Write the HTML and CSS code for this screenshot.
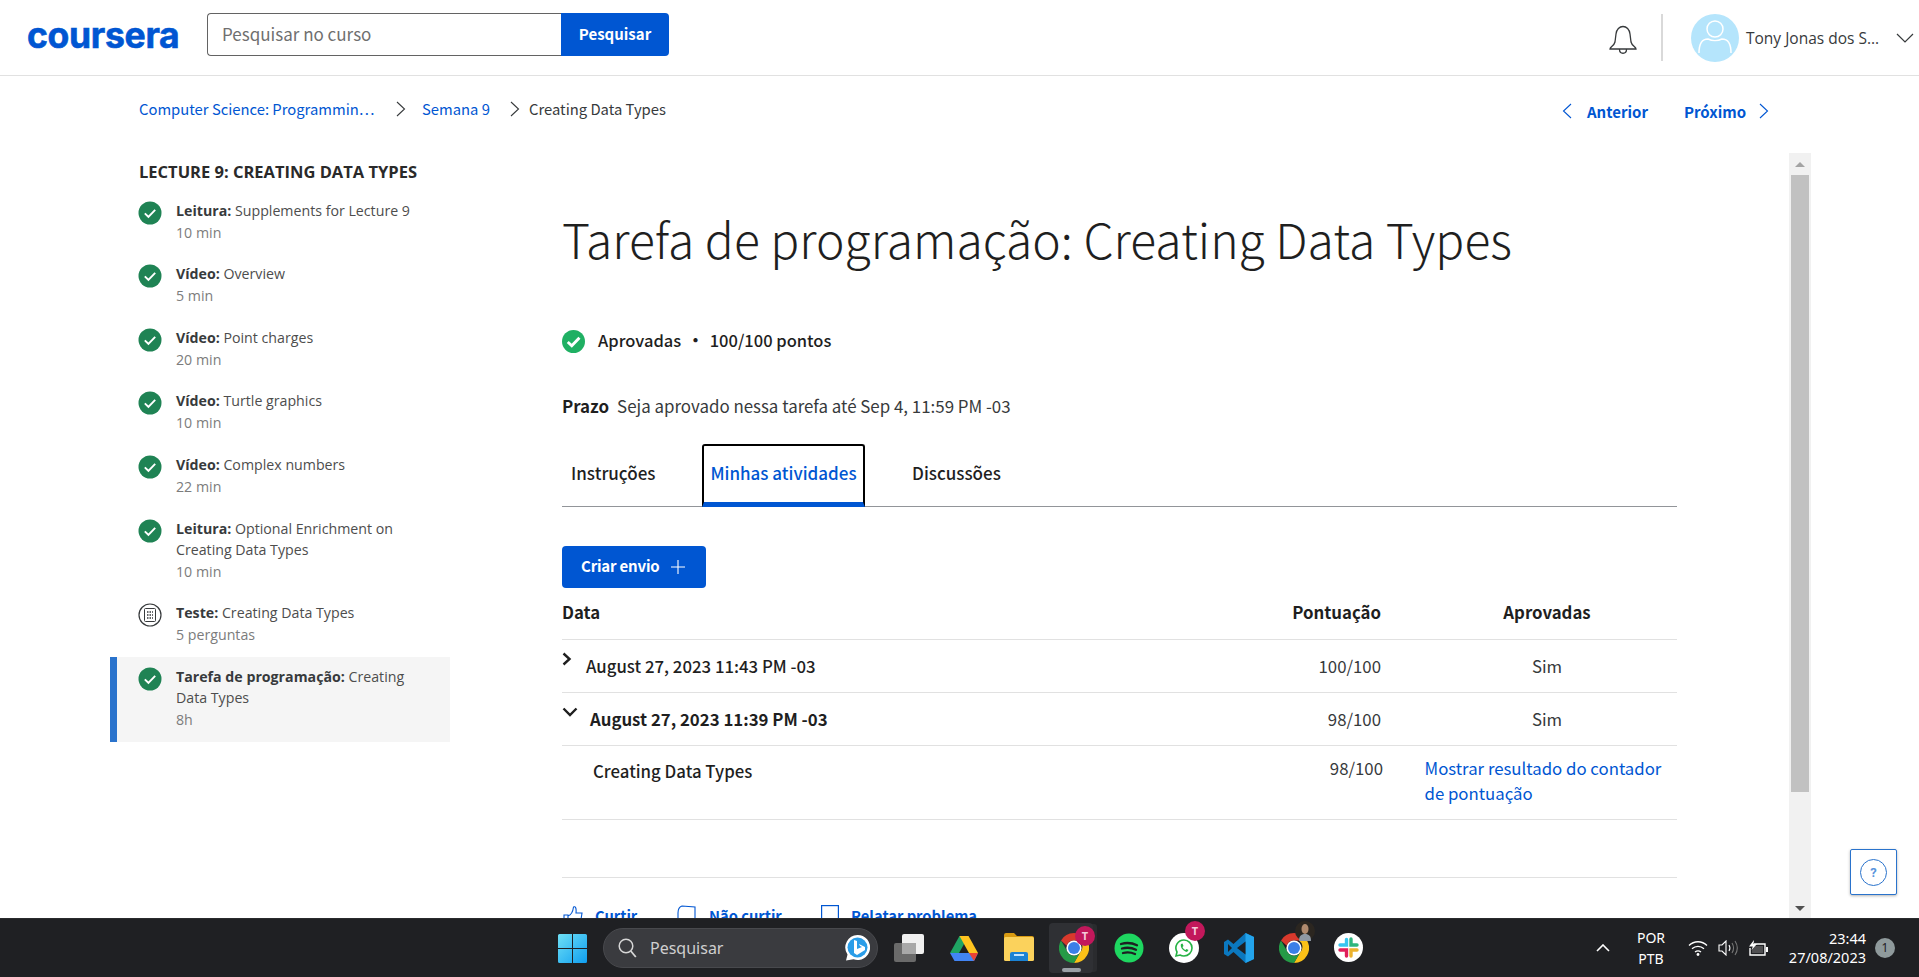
FILE: index.html
```html
<!DOCTYPE html>
<html lang="pt-BR">
<head>
<meta charset="utf-8">
<title>Tarefa de programação: Creating Data Types</title>
<link rel="stylesheet" href="styles.css">
</head>
<body>
<svg class="defs" width="0" height="0" aria-hidden="true">
  <symbol id="done" viewBox="0 0 24 24"><circle cx="12" cy="12" r="11.5" fill="#1f8354"/><path d="M6.8 12.4l3.6 3.4 6.8-7" fill="none" stroke="#fff" stroke-width="1.9"/></symbol>
  <symbol id="chrome" viewBox="0 0 30 30">
    <path d="M15 0a15 15 0 0 1 13 7.500H15a7.500 7.500 0 0 0-7.200 5.300L2 7.500A15 15 0 0 1 15 0z" fill="#d9392c"/>
    <path d="M28 7.500A15 15 0 0 1 15 30l6.500-11.200A7.500 7.500 0 0 0 20 7.500z" fill="#fbc117"/>
    <path d="M2 7.500l6 10.500a7.500 7.500 0 0 0 13.500.800L15 30A15 15 0 0 1 2 7.500z" fill="#259a46"/>
    <circle cx="15" cy="15" r="7.600" fill="#fff"/><circle cx="15" cy="15" r="6" fill="#3a7fe8"/>
  </symbol>
</svg>

<header class="topbar">
  <a class="logo">coursera</a>
  <div class="search">
    <div class="search-input">Pesquisar no curso</div>
    <div class="search-btn">Pesquisar</div>
  </div>
  <div class="top-right">
    <svg class="bell" width="28" height="30" viewBox="0 0 28 30"><path d="M1 24c0-2 4-3 5-7l1-8c.5-4.500 3.500-7.500 7-7.500s6.500 3 7 7.500l1 8c1 4 5 5 5 7z M10.500 24.500c0 5 7 5 7 0" fill="none" stroke="#373a3c" stroke-width="1.300"/></svg>
    <div class="divider"></div>
    <svg class="avatar" width="48" height="48" viewBox="0 0 48 48"><circle cx="24" cy="24" r="24" fill="#b5e5fc"/><circle cx="24" cy="15" r="8" fill="none" stroke="#fff" stroke-width="1.500"/><path d="M8 39c0-10 4-14 9-14 4 2 10 2 14 0 5 0 9 4 9 14" fill="none" stroke="#fff" stroke-width="1.500"/></svg>
    <span class="user-name">Tony Jonas dos S…</span>
    <svg class="user-caret" width="18" height="10" viewBox="0 0 18 10"><path d="M1 1l8 8 8-8" fill="none" stroke="#373a3c" stroke-width="1.200"/></svg>
  </div>
</header>

<nav class="subnav">
  <div class="crumbs">
    <a class="crumb-link crumb-course">Computer Science: Programmin…</a>
    <svg class="crumb-sep" width="10" height="16" viewBox="0 0 10 16"><path d="M1 1l7.500 7L1 15" fill="none" stroke="#373a3c" stroke-width="1.100"/></svg>
    <a class="crumb-link crumb-week">Semana 9</a>
    <svg class="crumb-sep" width="10" height="16" viewBox="0 0 10 16"><path d="M1 1l7.500 7L1 15" fill="none" stroke="#373a3c" stroke-width="1.100"/></svg>
    <span class="crumb-current">Creating Data Types</span>
  </div>
  <div class="pager">
    <svg width="10" height="16" viewBox="0 0 10 16"><path d="M9 1L1.500 8 9 15" fill="none" stroke="#0056d2" stroke-width="1.100"/></svg>
    <a class="pager-prev">Anterior</a>
    <a class="pager-next">Próximo</a>
    <svg width="10" height="16" viewBox="0 0 10 16"><path d="M1 1l7.500 7L1 15" fill="none" stroke="#0056d2" stroke-width="1.100"/></svg>
  </div>
</nav>

<div class="workspace">
  <aside class="sidebar">
    <h2 class="side-title">LECTURE 9: CREATING DATA TYPES</h2>
    <ul class="side-list">
      <li class="side-item"><svg class="side-icon"><use href="#done"/></svg><div><p class="side-name"><b>Leitura:</b> Supplements for Lecture 9</p><p class="side-meta">10 min</p></div></li>
      <li class="side-item"><svg class="side-icon"><use href="#done"/></svg><div><p class="side-name"><b>Vídeo:</b> Overview</p><p class="side-meta">5 min</p></div></li>
      <li class="side-item"><svg class="side-icon"><use href="#done"/></svg><div><p class="side-name"><b>Vídeo:</b> Point charges</p><p class="side-meta">20 min</p></div></li>
      <li class="side-item"><svg class="side-icon"><use href="#done"/></svg><div><p class="side-name"><b>Vídeo:</b> Turtle graphics</p><p class="side-meta">10 min</p></div></li>
      <li class="side-item"><svg class="side-icon"><use href="#done"/></svg><div><p class="side-name"><b>Vídeo:</b> Complex numbers</p><p class="side-meta">22 min</p></div></li>
      <li class="side-item"><svg class="side-icon"><use href="#done"/></svg><div><p class="side-name"><b>Leitura:</b> Optional Enrichment on Creating Data Types</p><p class="side-meta">10 min</p></div></li>
      <li class="side-item"><svg class="side-icon" viewBox="0 0 24 24"><circle cx="12" cy="12" r="11" fill="#fff" stroke="#373a3c" stroke-width="1.200"/><rect x="6.500" y="5.500" width="11" height="13" rx="1" fill="none" stroke="#373a3c" stroke-width="1"/><path d="M9 9h6M9 12h6M9 15h6" stroke="#373a3c" stroke-width="1.600" stroke-dasharray="1.500 1"/></svg><div><p class="side-name"><b>Teste:</b> Creating Data Types</p><p class="side-meta">5 perguntas</p></div></li>
      <li class="side-item side-item-active"><svg class="side-icon"><use href="#done"/></svg><div><p class="side-name"><b>Tarefa de programação:</b> Creating Data Types</p><p class="side-meta">8h</p></div></li>
    </ul>
  </aside>

  <main class="content">
    <h1 class="page-title">Tarefa de programação: Creating Data Types</h1>
    <div class="status">
      <svg width="23" height="23" viewBox="0 0 24 24"><circle cx="12" cy="12" r="12" fill="#1fb063"/><path d="M6 12.500l4.200 4 8-8.500" fill="none" stroke="#fff" stroke-width="3"/></svg>
      <span class="status-label">Aprovadas</span><span class="status-dot">•</span><span class="status-points">100/100 pontos</span>
    </div>
    <p class="deadline"><b>Prazo</b><span>Seja aprovado nessa tarefa até Sep 4, 11:59 PM -03</span></p>
    <div class="tabs">
      <div class="tab tab-first">Instruções</div>
      <div class="tab tab-active">Minhas atividades</div>
      <div class="tab tab-last">Discussões</div>
    </div>
    <button class="create-btn"><span class="create-label">Criar envio</span><svg width="14" height="14" viewBox="0 0 14 14"><path d="M7 0v14M0 7h14" stroke="#fff" stroke-width="1.100"/></svg></button>

    <div class="grid-row grid-head"><span>Data</span><span class="col-score">Pontuação</span><span class="col-pass">Aprovadas</span></div>
    <div class="grid-row">
      <span class="date-cell"><svg class="row-arrow" width="10" height="14" viewBox="0 0 10 14"><path d="M1.500 1.500L7.500 7l-6 5.500" fill="none" stroke="#1f1f1f" stroke-width="2.400"/></svg><span class="date-text">August 27, 2023 11:43 PM -03</span></span>
      <span class="col-score">100/100</span><span class="col-pass">Sim</span>
    </div>
    <div class="grid-row">
      <span class="date-cell"><svg class="row-arrow" width="16" height="10" viewBox="0 0 16 10"><path d="M1.500 1.500L8 8l6.500-6.500" fill="none" stroke="#1f1f1f" stroke-width="2.400"/></svg><span class="date-text date-strong">August 27, 2023 11:39 PM -03</span></span>
      <span class="col-score">98/100</span><span class="col-pass">Sim</span>
    </div>
    <div class="sub-wrap">
      <div class="grid-row sub-row">
        <span class="sub-name">Creating Data Types</span>
        <span class="col-score sub-score">98/100</span>
        <a class="sub-link">Mostrar resultado do contador de pontuação</a>
      </div>
    </div>
    <div class="table-end"></div>
    <div class="actions">
      <a class="action action-like"><svg width="20" height="22" viewBox="0 0 20 22"><path d="M1 10h4v11H1z M5 11c3-1 5-5 5.500-9 2-1 3 1 2.500 6h6l-2 13H5" fill="none" stroke="#0056d2" stroke-width="1.100"/></svg>Curtir</a>
      <a class="action action-dislike"><svg width="20" height="22" viewBox="0 0 20 22"><path d="M1 8c0-4 1-6 4-7l13 1v20H1z" fill="none" stroke="#0056d2" stroke-width="1.100"/></svg>Não curtir</a>
      <a class="action action-flag"><svg width="18" height="22" viewBox="0 0 18 22"><rect x=".6" y=".6" width="16.800" height="20" fill="none" stroke="#0056d2" stroke-width="1.200"/></svg>Relatar problema</a>
    </div>
  </main>

  <div class="scrollbar">
    <div class="sb-btn"><span class="sb-up"></span></div>
    <div class="sb-thumb"></div>
    <div class="sb-space"></div>
    <div class="sb-btn sb-btn-end"><span class="sb-down"></span></div>
  </div>
</div>

<button class="help"><span class="help-ring">?</span></button>

<footer class="taskbar">
  <svg class="tb-win" width="29" height="29" viewBox="0 0 29 29"><defs><linearGradient id="wg" x1="0" y1="0" x2="1" y2="1"><stop offset="0" stop-color="#6fe0f5"/><stop offset="1" stop-color="#0f9ef0"/></linearGradient></defs><path d="M0 1.500A1.500 1.500 0 0 1 1.500 0H14v14H0zM15 0h12.500A1.500 1.500 0 0 1 29 1.500V14H15zM0 15h14v14H1.500A1.500 1.500 0 0 1 0 27.500zM15 15h14v12.500a1.500 1.500 0 0 1-1.500 1.500H15z" fill="url(#wg)"/></svg>
  <div class="tb-search">
    <svg width="19" height="20" viewBox="0 0 19 20"><circle cx="8" cy="8" r="6.800" fill="none" stroke="#d6d6d6" stroke-width="1.500"/><path d="M12.800 13l5 6" stroke="#d6d6d6" stroke-width="1.800"/></svg>
    <span class="tb-search-text">Pesquisar</span>
    <svg class="tb-bing" width="25" height="26" viewBox="0 0 25 26"><path d="M12.500 0a12.500 12.500 0 1 1-4 24.300L1 25.500l1.500-6A12.500 12.500 0 0 1 12.500 0z" fill="#fff"/><circle cx="12.500" cy="12.500" r="10" fill="#2a9de8"/><path d="M9 5l3 1v8l5-2-2-1-1-2 6 3v3l-8 5-3-2z" fill="#fff"/></svg>
  </div>
  <svg class="tb-task" width="30" height="28" viewBox="0 0 30 28"><rect x="0" y="9" width="22" height="19" rx="2" fill="#6a6a6a"/><rect x="8" y="0" width="22" height="20" rx="2" fill="#f0f0f0"/><rect x="8" y="9" width="14" height="11" fill="#a8a8a8"/></svg>
  <svg class="tb-drive" width="28" height="25" viewBox="0 0 28 25"><path d="M9.500 0h9L9 17H0z" fill="#1fa463"/><path d="M18.500 0L28 17h-9L9.500 0z" fill="#ffc41f"/><path d="M5 17h23l-4 8H4.500L0 17z" fill="#4285f4"/><path d="M19 17h9l-4 8z" fill="#ea4335"/></svg>
  <span class="tb-app tb-folder-wrap">
    <svg width="30" height="28" viewBox="0 0 30 28"><path d="M0 2a2 2 0 0 1 2-2h8l3 3h15a2 2 0 0 1 2 2v4H0z" fill="#d99b12"/><rect y="4" width="30" height="24" rx="1.500" fill="#fbd25c"/><path d="M6 28v-7a2 2 0 0 1 2-2h14a2 2 0 0 1 2 2v7z" fill="#1a82d4"/><rect x="10" y="21" width="10" height="2" fill="#bfe3ff"/></svg>
    <i class="tb-dot"></i>
  </span>
  <span class="tb-tile">
    <svg width="30" height="30"><use href="#chrome"/></svg>
    <b class="tb-badge">T</b>
    <i class="tb-dot tb-dot-wide"></i>
  </span>
  <span class="tb-app tb-spotify">
    <svg width="30" height="30" viewBox="0 0 30 30"><circle cx="15" cy="15" r="14.500" fill="#1ed760"/><path d="M7 11c5-1.500 11-1.200 16 1.300M8 15.500c4.500-1.200 9.500-1 14 1.200M9 20c4-1 8-.8 12 1" fill="none" stroke="#1e1f22" stroke-width="2.300" stroke-linecap="round"/></svg>
    <i class="tb-dot"></i>
  </span>
  <span class="tb-app tb-whats">
    <svg width="30" height="30" viewBox="0 0 30 30"><circle cx="15" cy="15" r="15" fill="#fff"/><path d="M15 7a8 8 0 0 1 0 16 8 8 0 0 1-4-1l-4 1 1-4a8 8 0 0 1 7-12z" fill="none" stroke="#25b244" stroke-width="1.600"/><path d="M12 11c-1 2 1 7 6 8l1.500-2-2-1-1 1c-1.500-.5-2.500-1.800-3-3l1-1-1-2.500z" fill="#25b244"/></svg>
    <b class="tb-badge">T</b>
    <i class="tb-dot"></i>
  </span>
  <span class="tb-app tb-code">
    <svg width="30" height="30" viewBox="0 0 30 30"><path d="M21.500 0L30 4v22l-8.500 4-12-11L4 23.500 0 21V9l4-2.500L9.500 11z" fill="#0b78bf"/><path d="M21.500 0L30 4v22l-8.500 4z" fill="#23a4ec"/><path d="M21.500 8.500L13 15l8.500 6.500z M4 11l4 4-4 4z" fill="#1e1f22"/></svg>
    <i class="tb-dot"></i>
  </span>
  <span class="tb-app tb-chrome2">
    <svg width="30" height="30"><use href="#chrome"/></svg>
    <svg class="tb-photo" width="20" height="20" viewBox="0 0 20 20"><circle cx="10" cy="10" r="10" fill="#2b2620"/><ellipse cx="10" cy="8" rx="3.500" ry="5" fill="#b08a6e"/><path d="M4 20c0-5 2-7 6-7s6 2 6 7z" fill="#8f98a3"/></svg>
    <i class="tb-dot"></i>
  </span>
  <span class="tb-app tb-slack">
    <svg width="29" height="29" viewBox="0 0 29 29"><circle cx="14.500" cy="14.500" r="14.500" fill="#fff"/><g stroke-width="3.400" stroke-linecap="round" fill="none"><path d="M12.500 6.500v5.500H6" stroke="#36c5f0"/><path d="M17 6v6h6" stroke="#2eb67d"/><path d="M17 23v-6h6" stroke="#ecb22e"/><path d="M12.500 23v-6H6" stroke="#e01e5a"/></g></svg>
    <i class="tb-dot"></i>
  </span>
  <div class="tray">
    <svg class="tray-caret" width="14" height="8" viewBox="0 0 14 8"><path d="M1 7l6-6 6 6" fill="none" stroke="#fff" stroke-width="1.600"/></svg>
    <div class="tray-lang"><span>POR</span><span>PTB</span></div>
    <svg class="tray-wifi" width="20" height="16" viewBox="0 0 20 16"><path d="M1 5.500c5-5 13-5 18 0M4 8.800c3.500-3.200 8.500-3.200 12 0M7 12c1.800-1.400 4.200-1.400 6 0" fill="none" stroke="#fff" stroke-width="1.300"/><circle cx="10" cy="14.500" r="1.400" fill="#fff"/></svg>
    <svg class="tray-vol" width="20" height="16" viewBox="0 0 20 16"><path d="M1 5h3l4-4v14l-4-4H1z" fill="none" stroke="#fff" stroke-width="1.100"/><path d="M11 5c1.200 2 1.200 4 0 6" fill="none" stroke="#fff" stroke-width="1.100"/><path d="M14 3c2 3.200 2 6.800 0 10M17 1c3 4.500 3 9.500 0 14" fill="none" stroke="#777" stroke-width="1.100"/></svg>
    <svg class="tray-batt" width="20" height="17" viewBox="0 0 20 17"><rect x="4" y="6" width="11" height="7" fill="#aaa" opacity=".35"/><path d="M6 4h11v11H2V8" fill="none" stroke="#fff" stroke-width="1.400"/><rect x="18" y="7" width="2" height="5" fill="#fff"/><path d="M6 0L1 6.500h4L3.500 10 9 4H5.500z" fill="#fff"/></svg>
    <div class="tray-clock"><span>23:44</span><span>27/08/2023</span></div>
    <span class="tray-badge">1</span>
  </div>
</footer>
</body>
</html>
```

FILE: styles.css
```css
* { box-sizing: border-box; }
html, body { margin: 0; padding: 0; }
body {
  position: relative;
  width: 1919px;
  height: 977px;
  overflow: hidden;
  display: flex;
  flex-direction: column;
  background: #fff;
  color: #1f1f1f;
  font-family: "Noto Sans CJK SC", "Liberation Sans", sans-serif;
  font-size: 15px;
}
p, h1, h2, ul { margin: 0; padding: 0; }
li { list-style: none; }
.defs { position: absolute; }

.topbar {
  flex: none;
  height: 76px;
  border-bottom: 1px solid #e1e1e1;
  display: flex;
  align-items: center;
  padding-left: 27px;
}
.logo {
  width: 180px;
  color: #0056d2;
  font-family: Inter, "Liberation Sans", sans-serif;
  font-weight: 700;
  font-size: 35.500px;
  line-height: 40px;
  letter-spacing: -0.3px;
  -webkit-text-stroke: 0.6px #0056d2;
  margin-top: -3px;
}
.search { display: flex; height: 43px; margin-top: -6px; }
.search-input {
  width: 354px;
  border: 1px solid #636363;
  border-right: 0;
  border-radius: 4px 0 0 4px;
  padding-left: 14px;
  line-height: 39px;
  font-size: 17px;
  color: #6f6f6f;
}
.search-btn {
  width: 108px;
  background: #0056d2;
  color: #fff;
  border-radius: 0 4px 4px 0;
  text-align: center;
  font-weight: 700;
  font-size: 15px;
  line-height: 41px;
}
.top-right { margin-left: auto; display: flex; align-items: center; padding-right: 5px; }
.bell { margin-right: 24px; margin-top: 4px; }
.divider { width: 2px; height: 47px; background: #d9d9d9; margin-right: 28px; }
.avatar { margin-right: 7px; }
.user-name {
  width: 150px;
  font-family: "Open Sans", sans-serif;
  font-size: 15.500px;
  color: #373a3c;
}

.subnav {
  flex: none;
  height: 77px;
  display: flex;
  justify-content: space-between;
  padding: 25px 150px 0 139px;
}
.crumbs { display: flex; align-items: center; height: 16px; line-height: 16px; font-size: 14.800px; }
.crumb-link { color: #0056d2; }
.crumb-course { width: 236px; white-space: nowrap; }
.crumb-sep { margin-left: 21px; }
.crumb-week { margin-left: 16px; width: 67px; white-space: nowrap; }
.crumb-current { margin-left: 9px; color: #373a3c; }
.pager { display: flex; align-items: center; height: 20px; color: #0056d2; font-weight: 700; font-size: 15px; }
.pager-prev { margin-left: 15px; width: 97px; }
.pager-next { width: 75px; }

.workspace { flex: 1; min-height: 0; display: flex; overflow: hidden; padding-left: 110px; }

.sidebar { flex: none; width: 340px; padding-top: 8px; font-family: "Open Sans", sans-serif; }
.side-title {
  padding-left: 29px;
  font-size: 16.500px;
  line-height: 22px;
  font-weight: 700;
  color: #2a2a2a;
  margin-bottom: 7.500px;
  white-space: nowrap;
}
.side-item {
  display: flex;
  gap: 14px;
  padding: 9px 24px 9.350px 21px;
  border-left: 7px solid transparent;
}
.side-item-active { border-left-color: #2a73cc; background: #f5f5f5; }
.side-icon { flex: none; width: 24px; height: 24px; margin-top: 1px; }
.side-name { font-size: 14.200px; line-height: 21px; color: #4d4d4d; }
.side-name b { color: #373a3c; font-weight: 700; }
.side-meta { font-size: 14.200px; line-height: 24.300px; color: #7c7c7c; }

.content { flex: none; width: 1115px; margin-left: 112px; margin-right: 112px; padding-top: 55px; }
.page-title { font-size: 48px; line-height: 60px; font-weight: 300; color: #1f1f1f; white-space: nowrap; }
.status { display: flex; align-items: center; height: 24px; margin-top: 61px; font-size: 16.500px; font-weight: 500; }
.status span { margin-top: -3px; }
.status-label { margin-left: 13px; }
.status-dot { margin: 0 6px; font-weight: 700; }
.deadline { margin-top: 41px; height: 24px; font-size: 16.900px; line-height: 24px; color: #373a3c; }
.deadline b { color: #1f1f1f; font-weight: 700; margin-right: 8px; }
.tabs { margin-top: 26px; height: 63px; display: flex; border-bottom: 1px solid #929599; font-size: 17px; font-weight: 500; }
.tab { line-height: 58px; }
.tab-first { width: 140px; padding-left: 9px; }
.tab-active {
  width: 163px;
  height: 63px;
  text-align: center;
  color: #0056d2;
  border-top: 2px solid #000;
  border-left: 2px solid #000;
  border-right: 2px solid #000;
  border-bottom: 5px solid #0056d2;
  border-radius: 3px 3px 0 0;
  line-height: 54px;
}
.tab-last { margin-left: 47px; }
.create-btn {
  display: flex;
  align-items: center;
  margin-top: 39px;
  width: 144px;
  height: 42px;
  padding: 0 0 0 19px;
  border: 0;
  border-radius: 4px;
  background: #0056d2;
  color: #fff;
  font-family: inherit;
  font-weight: 700;
  font-size: 15px;
  letter-spacing: -0.2px;
}
.create-label { margin-top: -4px; }
.create-btn svg { margin-left: 12px; }

.grid-row {
  display: grid;
  grid-template-columns: 1fr 120px 245px;
  column-gap: 43.500px;
  padding-right: 7.500px;
  align-items: center;
  height: 53px;
  border-bottom: 1px solid #e1e1e1;
  font-size: 16.800px;
  color: #373a3c;
}
.col-score { text-align: right; }
.col-pass { text-align: center; }
.grid-head { height: 52px; font-weight: 700; color: #1f1f1f; padding-bottom: 3px; }
.date-cell { position: relative; display: flex; align-items: center; }
.row-arrow { flex: none; margin-top: -14px; }
.date-text { margin-left: 14px; color: #1f1f1f; font-weight: 500; }
.date-strong { margin-left: 12px; font-weight: 700; }
.sub-wrap { position: relative; margin-left: 19px; }
.sub-wrap::after { content: ""; position: absolute; left: -19px; right: 0; bottom: 0; border-bottom: 1px solid #e1e1e1; }
.sub-row { height: 74px; align-items: start; }
.sub-name { padding: 13px 0 0 12px; color: #1f1f1f; font-weight: 500; }
.sub-score { padding-top: 10px; margin-right: -2px; }
.sub-link { padding-top: 10px; color: #0056d2; line-height: 25px; }
.table-end { height: 58px; border-bottom: 1px solid #e1e1e1; }
.actions { display: flex; padding: 27px 0 0 1px; color: #0056d2; font-weight: 700; font-size: 14.700px; }
.action { display: flex; gap: 12px; height: 22px; line-height: 22px; }
.action-like { width: 114px; }
.action-dislike { width: 144px; }

.scrollbar { flex: none; width: 22px; background: #f1f1f1; display: flex; flex-direction: column; align-items: center; }
.sb-btn { flex: none; height: 22px; width: 22px; display: flex; align-items: center; justify-content: center; }
.sb-btn-end { height: 20px; }
.sb-up { border: 5px solid transparent; border-top: 0; border-bottom: 5px solid #a3a3a3; }
.sb-down { border: 5px solid transparent; border-bottom: 0; border-top: 5px solid #505050; }
.sb-thumb { flex: none; width: 18px; height: 617px; background: #c1c1c1; }
.sb-space { flex: 1; }

.help {
  position: absolute;
  left: 1850px;
  top: 849px;
  width: 47px;
  height: 46px;
  padding: 0;
  background: #fff;
  border: 1px solid #2a73cc;
  border-radius: 2px;
  box-shadow: 0 1px 3px rgba(0,0,0,.3);
  display: flex;
  align-items: center;
  justify-content: center;
}
.help-ring {
  width: 27px;
  height: 27px;
  border: 1px solid #2a73cc;
  border-radius: 50%;
  color: #5a95dd;
  font-family: Roboto, sans-serif;
  font-weight: 700;
  font-size: 13px;
  line-height: 25px;
  text-align: center;
}

.taskbar {
  flex: none;
  height: 59px;
  background: #1f2023;
  border-top: 1px solid #2a2b2e;
  display: flex;
  align-items: center;
  padding-left: 558px;
  font-family: "Noto Sans", sans-serif;
  color: #fff;
  position: relative;
}
.tb-win { flex: none; }
.tb-search {
  flex: none;
  margin-left: 16px;
  width: 275px;
  height: 40px;
  border-radius: 20px;
  background: #3a3b3f;
  border: 1px solid #48494d;
  display: flex;
  align-items: center;
  padding-left: 14px;
}
.tb-search-text { margin-left: 13px; font-size: 16px; color: #cfcfcf; }
.tb-bing { margin-left: auto; margin-right: 7px; }
.tb-task { flex: none; margin-left: 16px; }
.tb-drive { flex: none; margin-left: 26px; }
.tb-app { position: relative; flex: none; display: block; height: 30px; }
.tb-app svg { display: block; }
.tb-folder-wrap { margin-left: 26px; width: 30px; }
.tb-dot { position: absolute; left: 50%; bottom: -22px; width: 8px; height: 4px; margin-left: -4px; border-radius: 2px; background: #8d8e90; }
.tb-tile {
  position: relative;
  flex: none;
  margin-left: 15px;
  width: 44px;
  height: 50px;
  border-radius: 4px;
  background: #2f3034;
  box-shadow: 5px 0 0 -1px #2a2b2e;
  display: flex;
  align-items: center;
  padding-left: 10px;
}
.tb-dot-wide { width: 19px; margin-left: -9px; bottom: 1px; background: #9aa0a6; }
.tb-badge {
  position: absolute;
  width: 20px;
  height: 20px;
  border-radius: 50%;
  background: #c2185b;
  color: #f4c9d9;
  font-size: 11px;
  font-weight: 700;
  line-height: 20px;
  text-align: center;
}
.tb-tile .tb-badge { left: 26px; top: 3px; }
.tb-spotify { margin-left: 21px; width: 30px; }
.tb-whats { margin-left: 25px; width: 30px; }
.tb-whats .tb-badge { left: 16px; top: -12px; }
.tb-code { margin-left: 25px; width: 30px; }
.tb-chrome2 { margin-left: 25px; width: 30px; }
.tb-photo { position: absolute; left: 16px; top: -12px; }
.tb-slack { margin-left: 25px; width: 29px; }
.tray { position: absolute; right: 0; top: 0; bottom: 0; display: flex; align-items: center; width: 323px; }
.tray-lang { display: flex; flex-direction: column; align-items: center; width: 40px; margin-left: 21px; font-size: 14px; line-height: 21px; }
.tray-wifi { margin-left: 17px; }
.tray-vol { margin-left: 10px; }
.tray-batt { margin-left: 10px; }
.tray-clock { display: flex; flex-direction: column; align-items: flex-end; width: 98px; font-size: 14.500px; line-height: 19px; }
.tray-badge { margin-left: 9px; width: 20px; height: 20px; border-radius: 50%; background: #8f9a9c; color: #1f2023; font-size: 12px; line-height: 20px; text-align: center; }
```
